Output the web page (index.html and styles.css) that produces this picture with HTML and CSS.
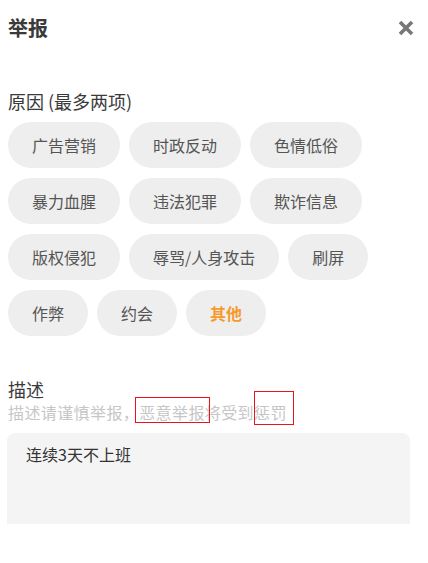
FILE: index.html
```html
<!DOCTYPE html>
<html lang="zh-CN">
<head>
    <meta charset="UTF-8">
    <meta name="viewport" content="width=device-width, initial-scale=1.0">
    <title>举报</title>
    <link rel="stylesheet" href="styles.css">
</head>
<body>
    <div class="header">
        <h2 class="titulo">举报</h2>
        <span class="cerrar">
            <svg width="16" height="16" viewBox="0 0 16 16">
                <path d="M2 2 L14 14 M14 2 L2 14" stroke="#777" stroke-width="3.6" stroke-linecap="butt" fill="none"/>
            </svg>
        </span>
    </div>

    <p class="etiqueta">原因 (最多两项)</p>
    <div class="chips">
        <span class="chip">广告营销</span>
        <span class="chip">时政反动</span>
        <span class="chip">色情低俗</span>
        <span class="chip">暴力血腥</span>
        <span class="chip">违法犯罪</span>
        <span class="chip">欺诈信息</span>
        <span class="chip">版权侵犯</span>
        <span class="chip">辱骂/人身攻击</span>
        <span class="chip">刷屏</span>
        <span class="chip">作弊</span>
        <span class="chip">约会</span>
        <span class="chip activo">其他</span>
    </div>

    <p class="etiqueta desc">描述</p>
    <p class="aviso">描述请谨慎举报，<span class="marca m1">恶意举报</span>将受到<span class="marca m2">惩罚</span></p>
    <div class="caja">连续3天不上班</div>
</body>
</html>
```

FILE: styles.css
```css
body {
    margin: 0;
    padding: 0 8px;
    font-family: "Noto Sans CJK SC", "Noto Sans", sans-serif;
    color: #333;
    background: #fff;
}
.header {
    display: flex;
    justify-content: space-between;
    align-items: center;
    padding: 14px 6px 0 0;
    height: 28px;
}
.titulo {
    margin: 0;
    font-size: 20px;
    line-height: 28px;
    font-weight: bold;
    color: #3a3a3a;
}
.cerrar {
    display: flex;
    width: 16px;
    height: 16px;
    margin-top: -1px;
}
.etiqueta {
    margin: 47px 0 9px;
    font-size: 18px;
    line-height: 24px;
    color: #3a3a3a;
}
.chips {
    display: flex;
    flex-wrap: wrap;
    gap: 10px 9px;
    width: 380px;
}
.chip {
    height: 46px;
    line-height: 46px;
    padding: 0 24px;
    border-radius: 23px;
    background-color: #eeeeee;
    color: #555;
    font-size: 16px;
}
.chip.activo {
    color: #f79a2e;
    font-weight: bold;
}
.desc {
    margin: 41px 0 0;
}
.aviso {
    margin: 0;
    font-size: 16px;
    line-height: 22px;
    letter-spacing: 0.4px;
    color: #c6c6c6;
}
.marca {
    position: relative;
}
.marca::after {
    content: "";
    position: absolute;
    border: 1px solid #e8141b;
}
.m1::after {
    left: -4px;
    right: -5px;
    top: -3px;
    bottom: 1px;
}
.m2::after {
    left: 0;
    right: -7px;
    top: -9px;
    bottom: -1px;
}
.caja {
    margin: 10px 10px 0 -1px;
    height: 91px;
    box-sizing: border-box;
    padding: 10px 19px;
    background-color: #f4f4f4;
    border-radius: 8px 8px 0 0;
    font-size: 16px;
    line-height: 22px;
    color: #333;
}
```
